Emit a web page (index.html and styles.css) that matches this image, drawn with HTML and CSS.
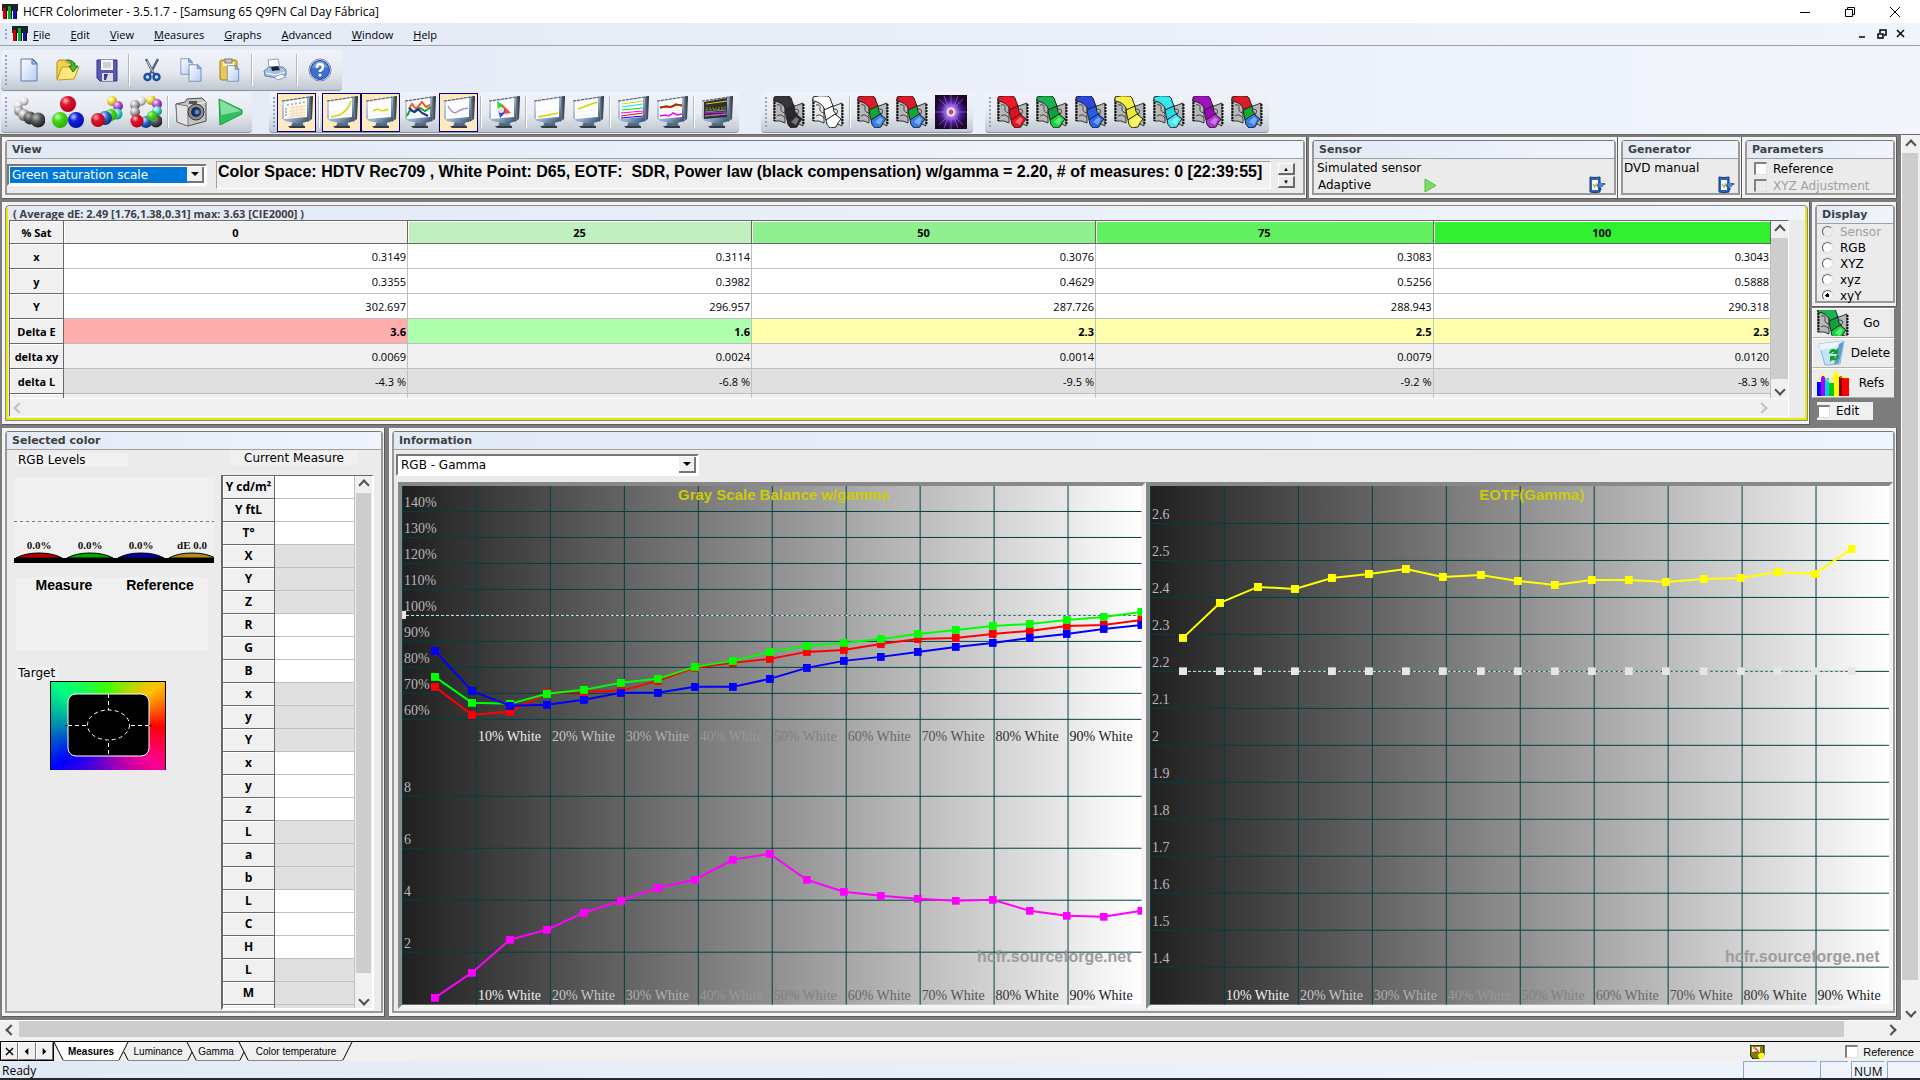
FILE: index.html
```html
<!DOCTYPE html>
<html lang="en">
<head>
  <meta charset="UTF-8" />
  <meta name="viewport" content="width=device-width, initial-scale=1.0" />
  <title>HCFR Colorimeter</title>
  <link rel="stylesheet" href="styles.css">
</head>
<body>
  <!-- ===== shared symbols ===== -->
  <svg class="defs" width="0" height="0" aria-hidden="true">
    <defs>
      <linearGradient id="g-bezel" x1="0" y1="0" x2="1" y2="1"><stop offset="0" stop-color="#d4e0ec"/><stop offset=".6" stop-color="#8ca8c8"/><stop offset="1" stop-color="#2d4460"/></linearGradient>
      <linearGradient id="g-side" x1="0" y1="0" x2="1" y2="0"><stop offset="0" stop-color="#8494a6"/><stop offset="1" stop-color="#1d2833"/></linearGradient>
      <linearGradient id="g-paper" x1="0" y1="0" x2="1" y2="1"><stop offset="0" stop-color="#fff"/><stop offset="1" stop-color="#b5cdf5"/></linearGradient>
      <linearGradient id="g-gray" x1="0" y1="0" x2="1" y2="0"><stop offset="0" stop-color="#202020"/><stop offset="1" stop-color="#fff"/></linearGradient>
      <radialGradient id="b-white" cx=".35" cy=".3" r=".7"><stop offset="0" stop-color="#fff"/><stop offset=".6" stop-color="#ddd"/><stop offset="1" stop-color="#888"/></radialGradient>
      <radialGradient id="b-gray" cx=".35" cy=".3" r=".7"><stop offset="0" stop-color="#fff"/><stop offset=".5" stop-color="#aaa"/><stop offset="1" stop-color="#555"/></radialGradient>
      <radialGradient id="b-dark" cx=".35" cy=".3" r=".7"><stop offset="0" stop-color="#bbb"/><stop offset=".5" stop-color="#555"/><stop offset="1" stop-color="#222"/></radialGradient>
      <radialGradient id="b-red" cx=".35" cy=".3" r=".7"><stop offset="0" stop-color="#fbb"/><stop offset=".4" stop-color="#dc1430"/><stop offset="1" stop-color="#b80018"/></radialGradient>
      <radialGradient id="b-green" cx=".35" cy=".3" r=".7"><stop offset="0" stop-color="#cfc"/><stop offset=".4" stop-color="#48d818"/><stop offset="1" stop-color="#28b008"/></radialGradient>
      <radialGradient id="b-blue" cx=".35" cy=".3" r=".7"><stop offset="0" stop-color="#bcd4ff"/><stop offset=".4" stop-color="#1020e0"/><stop offset="1" stop-color="#0610a0"/></radialGradient>
      <radialGradient id="b-sky" cx=".35" cy=".3" r=".7"><stop offset="0" stop-color="#d4e8ff"/><stop offset=".5" stop-color="#2868d0"/><stop offset="1" stop-color="#083484"/></radialGradient>
      <radialGradient id="b-cyan" cx=".35" cy=".3" r=".7"><stop offset="0" stop-color="#eff"/><stop offset=".5" stop-color="#4cd8cc"/><stop offset="1" stop-color="#148c84"/></radialGradient>
      <radialGradient id="b-yellow" cx=".35" cy=".3" r=".7"><stop offset="0" stop-color="#fff"/><stop offset=".5" stop-color="#f0dc30"/><stop offset="1" stop-color="#a08c00"/></radialGradient>
      <radialGradient id="b-violet" cx=".35" cy=".3" r=".7"><stop offset="0" stop-color="#fdf"/><stop offset=".5" stop-color="#b450d8"/><stop offset="1" stop-color="#702090"/></radialGradient>
      <radialGradient id="g-nova"><stop offset="0" stop-color="#e04878"/><stop offset=".13" stop-color="#c04880"/><stop offset=".18" stop-color="#fff"/><stop offset=".32" stop-color="#a878e8"/><stop offset=".62" stop-color="#4c1c98"/><stop offset="1" stop-color="#1c0828"/></radialGradient>

      <symbol id="logo" viewBox="0 0 16 16">
        <rect width="16" height="16" fill="#222"/><rect y="7" width="16" height="9" fill="#f4f4f4"/>
        <path d="M1 4h4v11H1z" fill="#c80000"/><path d="M6 2h4v13H6z" fill="#00b428"/><path d="M11 5h4v10h-4z" fill="#1010b4"/>
        <path d="M4 4h1v11H4zM9 2h1v13H9zM14 5h1v10h-1z" fill="#111"/>
      </symbol>
      <symbol id="monitor" viewBox="0 0 32 32">
        <path d="M12 26h9l2 4H10z" fill="#55677c"/><path d="M7 30h17v2H9z" fill="#333c46"/>
        <path d="M27 1l5-1-1 23-4 3z" fill="url(#g-side)"/>
        <path d="M1 5L28 1v24l-10 3-14-3-3-3z" fill="url(#g-bezel)"/>
        <path d="M1 5L31 .5" stroke="#4d5560" stroke-dasharray="3 1" fill="none"/>
        <path d="M3 6l23-4v19L3 23z" fill="var(--screen, #fdfdfd)"/>
        <path d="M4 20L25 18M4 16l21-2" stroke="#e4e8ec" fill="none" opacity=".5"/>
      </symbol>
      <symbol id="film" viewBox="0 0 32 32">
        <path d="M1 3v22h6l5 2V8zM18 9l4 1 8-3v23l-4-2h-8z" fill="var(--strip, #b8b8b8)" stroke="#333"/>
        <path d="M1.500 3v22M30.500 8v21" stroke="#111" stroke-width="2" stroke-dasharray="2 1"/>
        <path d="M4 9q5-1 4 3t4 5M4 20q4-3 8 2M22 13q5 0 3 4t3 5" fill="none" stroke="#444"/>
        <path d="M1 1Q7-1 16 0q3 2 3 5l2 5-8 4Q10 6 1 5z" fill="var(--a)" stroke="#222"/>
        <path d="M12 14l9-4q0 6 3 8l-10 6q-1-4-2-10z" fill="var(--b)" stroke="#222"/>
        <path d="M14 24l9-6 6 5q-3 3-5 8l-6 1q-4-3-4-8z" fill="var(--c)" stroke="#222"/>
        <path d="M18 26l5-5 3 2-3 6z" fill="#fff" opacity=".35"/>
      </symbol>
      <symbol id="doc" viewBox="0 0 18 24">
        <path d="M1 1h12l4 4v18H1z" fill="url(#g-paper)" stroke="#5a78b4"/><path d="M12 1v5h5z" fill="#a4bde8" stroke="#5a78b4"/>
      </symbol>
      <symbol id="clip" viewBox="0 0 18 20">
        <path d="M2 2q5 1 10 0v15q-5 1-10 0z" fill="#2c64b8" stroke="#123870"/><path d="M4 5h6v10H4z" fill="#f4f8ff"/>
        <path d="M5 9l2 3 2-4" stroke="#d0b040" stroke-width="1.500" fill="none"/><path d="M9 11l3-2h5M11 12l2 3" stroke="#1c4a90" stroke-width="2" fill="none"/><circle cx="13" cy="10" r="2.500" fill="#3c8ae8"/><circle cx="16.500" cy="9" r="1" fill="#c04020"/>
      </symbol>
    </defs>
  </svg>

  <!-- ===== title bar ===== -->
  <header class="titlebar">
    <svg class="app-icon"><use href="#logo"/></svg>
    <h1>HCFR Colorimeter - 3.5.1.7 - [Samsung 65 Q9FN Cal Day Fábrica]</h1>
    <div class="win-buttons">
      <button aria-label="Minimize"><svg viewBox="0 0 10 10"><path d="M0 5.500h10" /></svg></button>
      <button aria-label="Restore"><svg viewBox="0 0 10 10"><path d="M.5 2.500h7v7h-7zM2.500 2.500v-2h7v7h-2"/></svg></button>
      <button aria-label="Close"><svg viewBox="0 0 10 10"><path d="M0 0l10 10M10 0L0 10"/></svg></button>
    </div>
  </header>

  <!-- ===== menu ===== -->
  <nav class="menubar">
    <span class="grip"></span>
    <svg class="app-icon"><use href="#logo"/></svg>
    <a href="#"><u>F</u>ile</a>
    <a href="#"><u>E</u>dit</a>
    <a href="#"><u>V</u>iew</a>
    <a href="#"><u>M</u>easures</a>
    <a href="#"><u>G</u>raphs</a>
    <a href="#"><u>A</u>dvanced</a>
    <a href="#"><u>W</u>indow</a>
    <a href="#"><u>H</u>elp</a>
    <div class="mdi-buttons">
      <button aria-label="Minimize document"><svg viewBox="0 0 10 10"><path d="M1 8h6" /></svg></button>
      <button aria-label="Restore document"><svg viewBox="0 0 10 10"><path d="M1 5h5v4H1zM3 4V1h6v5H7"/></svg></button>
      <button aria-label="Close document"><svg viewBox="0 0 10 10"><path d="M1 1l7 7M8 1L1 8"/></svg></button>
    </div>
  </nav>

  <!-- ===== toolbars ===== -->
  <div class="toolbars">
    <div class="toolrow">
      <div class="toolbar">
        <span class="grip"></span>
        <button aria-label="New"><svg width="18" height="24"><use href="#doc"/></svg></button>
        <button aria-label="Open"><svg width="26" height="24" viewBox="0 0 26 24"><path d="M2 21V4l2-2h6l2 3h8v4" fill="#f4d050" stroke="#b08a10"/><path d="M2 22L7 9h17l-5 12z" fill="#ffe680" stroke="#c09a18"/><path d="M11 2q8-1 9 6l3 0-5 6-4-6h3q0-4-6-6z" fill="#4cb838" stroke="#1f7a18"/></svg></button>
        <button aria-label="Save"><svg width="22" height="23" viewBox="0 0 22 23"><path d="M1 1h20v21H4l-3-3z" fill="#5a56b8" stroke="#34307c"/><path d="M5 1h12v10H5z" fill="#f4f4fa"/><path d="M7 4h8M7 6h8M7 8h8" stroke="#aaa"/><path d="M6 14h11v8H6z" fill="#dcdce8"/><path d="M8 15h4l-2 6H8z" fill="#3c3888"/></svg></button>
        <span class="sep"></span>
        <button aria-label="Cut"><svg width="18" height="24" viewBox="0 0 18 24"><path d="M3 1l8 15M15 1L7 16" stroke="#52657c" stroke-width="2.500" fill="none"/><path d="M4 3l6 11" stroke="#c4d4e4" fill="none"/><circle cx="4.500" cy="19" r="3" fill="none" stroke="#1450a8" stroke-width="2.500"/><circle cx="13.500" cy="19" r="3" fill="none" stroke="#1450a8" stroke-width="2.500"/></svg></button>
        <button aria-label="Copy"><svg width="22" height="24" viewBox="0 0 22 24"><use href="#doc" width="13" height="17"/><use href="#doc" x="8" y="6" width="14" height="18"/></svg></button>
        <button aria-label="Paste"><svg width="22" height="24" viewBox="0 0 22 24"><rect x="1" y="2" width="17" height="20" rx="2" fill="#e8c858" stroke="#a07c18"/><path d="M4 4h11v4H4z" fill="#fff4c8"/><rect x="6" y="1" width="7" height="4" fill="#c8c8d0" stroke="#777"/><use href="#doc" x="7" y="7" width="14" height="17"/></svg></button>
        <span class="sep"></span>
        <button aria-label="Print"><svg width="24" height="24" viewBox="0 0 24 24"><path d="M6 9L5 2l10-1 2 9z" fill="#fff" stroke="#8ca0c0"/><path d="M1 13l5-4 14 0 3 3v5l-9 3-12-2z" fill="#a8c0e0" stroke="#6080ac"/><path d="M8 9l7-1 2 4-8 1z" fill="#14243c"/><path d="M11 19l8-3 4 3-8 3z" fill="#f6faff" stroke="#8ca0c0"/><path d="M3 15l10 2 9-3" stroke="#fff" fill="none"/></svg></button>
        <span class="sep"></span>
        <button aria-label="Help"><svg width="24" height="24" viewBox="0 0 24 24"><circle cx="12" cy="12" r="11" fill="#f4f6fa" stroke="#7888a8"/><circle cx="12" cy="12" r="9.500" fill="#3c70d0" stroke="#1c469c"/><path d="M4 10q3-7 8-7t8 7q-8-3-16 0z" fill="#fff" opacity=".3"/><path d="M9 10q0-4 3-4t3 3q0 2-3 4v1" fill="none" stroke="#fff" stroke-width="2.500"/><circle cx="12" cy="17" r="1.500" fill="#fff"/></svg></button>
      </div>
    </div>
    <div class="toolrow">
      <div class="toolbar">
        <span class="grip"></span>
        <button aria-label="Measure gray scale"><svg width="32" height="32" viewBox="0 0 32 32"><circle cx="11" cy="5" r="4.500" fill="url(#b-white)"/><circle cx="5" cy="9" r="4.500" fill="url(#b-white)"/><circle cx="6" cy="15" r="5" fill="url(#b-gray)"/><circle cx="11" cy="19" r="6" fill="url(#b-gray)"/><circle cx="17" cy="22" r="6.500" fill="url(#b-dark)"/><circle cx="25" cy="24" r="7.500" fill="url(#b-dark)"/></svg></button>
        <button aria-label="Measure primaries"><svg width="32" height="32" viewBox="0 0 32 32"><circle cx="16" cy="8" r="8" fill="url(#b-red)"/><circle cx="8" cy="24" r="8" fill="url(#b-green)"/><circle cx="24" cy="24" r="8" fill="url(#b-blue)"/></svg></button>
        <button aria-label="Measure secondaries"><svg width="32" height="32" viewBox="0 0 32 32"><circle cx="21" cy="5" r="5" fill="url(#b-yellow)"/><circle cx="27" cy="10" r="5" fill="url(#b-violet)"/><circle cx="26" cy="18" r="5.500" fill="url(#b-cyan)"/><circle cx="20" cy="19" r="6" fill="url(#b-green)"/><circle cx="14" cy="22" r="7" fill="url(#b-sky)"/><circle cx="7" cy="24" r="7" fill="url(#b-red)"/></svg></button>
        <button aria-label="Measure all"><svg width="32" height="32" viewBox="0 0 32 32"><circle cx="11" cy="5" r="5" fill="url(#b-white)"/><circle cx="21" cy="4" r="5" fill="url(#b-yellow)"/><circle cx="27" cy="8" r="5" fill="url(#b-violet)"/><circle cx="5" cy="9" r="5" fill="url(#b-gray)"/><circle cx="5" cy="16" r="5" fill="url(#b-gray)"/><circle cx="27" cy="15" r="5" fill="url(#b-cyan)"/><circle cx="16" cy="26" r="6" fill="url(#b-sky)"/><circle cx="7" cy="25" r="6.500" fill="url(#b-red)"/><circle cx="26" cy="25" r="6.500" fill="url(#b-dark)"/><circle cx="22" cy="20" r="5" fill="url(#b-green)"/></svg></button>
        <span class="sep"></span>
        <button aria-label="Camera"><svg width="32" height="30" viewBox="0 0 32 30"><path d="M1 7l9-2 2-3 15-1 4 4v19l-18 5-11-4z" fill="#c4c4c4" stroke="#4c4c4c"/><path d="M1 7l12 2v20l-11-4z" fill="#e4e4e4" stroke="#777"/><path d="M13 9l18-4" stroke="#f8f8f8"/><circle cx="21" cy="15" r="8" fill="#8c8c8c" stroke="#333"/><circle cx="21" cy="15" r="5" fill="#1c2c50"/><circle cx="22" cy="15" r="2.500" fill="#4c88d0"/><path d="M14 4h8v3h-8z" fill="#555"/></svg></button>
        <button aria-label="Run"><svg width="26" height="28" viewBox="0 0 26 28"><path d="M2 1l23 11v4L3 27z" fill="#30c060" stroke="#1c9844"/><path d="M3 2l21 11L4 17z" fill="#84e0a0"/></svg></button>
      </div>
      <div class="toolbar bar-graphs">
        <span class="grip"></span>
        <button class="on" aria-label="Table"><svg width="32" height="32" viewBox="0 0 32 32"><use href="#monitor"/><path d="M6 9l18-3" stroke="#b4b0b8" stroke-width="2" stroke-dasharray="2 2"/><path d="M5 12v9" stroke="#b4b0b8" stroke-width="2" stroke-dasharray="2 1"/><path d="M8 12l17-2M8 15l17-2M8 18l17-2M8 21l17-2M12 10v11M16 10v10M20 9v11" stroke="#fbe0b0" stroke-width="1.500" fill="none"/></svg></button>
        <span class="sep"></span>
        <button class="on" aria-label="Luminance"><svg width="32" height="32" viewBox="0 0 32 32"><use href="#monitor"/><path d="M5 21q16-2 20-16" stroke="#d8d400" stroke-width="1.500" fill="none"/></svg></button>
        <button class="on" aria-label="Gamma graph"><svg width="32" height="32" viewBox="0 0 32 32"><use href="#monitor"/><path d="M8 15q4-3 7-1t8-1" stroke="#d8d400" stroke-width="1.500" fill="none"/></svg></button>
        <button aria-label="RGB levels"><svg width="32" height="32" viewBox="0 0 32 32"><use href="#monitor"/><path d="M5 13l3-5 4 5 6-7 4 5 4-2" stroke="#e85c20" stroke-width="2" fill="none"/><path d="M3 20l3-6 5 2 5-4 5 3 6-4" stroke="#18a020" stroke-width="2" fill="none"/><path d="M5 12l5 4 4-3 4 4 6 3" stroke="#1c2c9c" stroke-width="2" fill="none"/></svg></button>
        <button class="on" aria-label="Color temperature graph"><svg width="32" height="32" viewBox="0 0 32 32"><use href="#monitor"/><path d="M5 10q5 9 9 6t11-4" stroke="#9c90e0" stroke-width="1.500" fill="none"/></svg></button>
        <span class="sep"></span>
        <button aria-label="CIE diagram"><svg width="32" height="32" viewBox="0 0 32 32"><use href="#monitor"/><path d="M9 5l6 4-5 7z" fill="#20e030"/><path d="M14 8l9 9-8 1-2-5z" fill="#f05030"/><path d="M10 14l7 0-1 4-4 4z" fill="#4040f0"/><circle cx="13" cy="14" r="3" fill="#d8e8f0"/></svg></button>
        <span class="sep"></span>
        <button aria-label="Near black"><svg width="32" height="32" viewBox="0 0 32 32"><use href="#monitor"/><path d="M5 21l20-4" stroke="#d8d400" stroke-width="1.500"/></svg></button>
        <button aria-label="Near white"><svg width="32" height="32" viewBox="0 0 32 32"><use href="#monitor"/><path d="M6 13l19-7" stroke="#d8d400" stroke-width="1.500"/></svg></button>
        <span class="sep"></span>
        <button aria-label="Saturation luminance"><svg width="32" height="32" viewBox="0 0 32 32"><use href="#monitor"/><path d="M5 8l21-3" stroke="#d8d400"/><path d="M5 11l21-3" stroke="#00e8e8"/><path d="M5 14l21-2" stroke="#00e000"/><path d="M4 17l22-2" stroke="#f0f"/><path d="M4 20l22-3" stroke="red"/><path d="M4 22l22-2" stroke="#00f"/></svg></button>
        <button aria-label="Saturation shift"><svg width="32" height="32" viewBox="0 0 32 32"><use href="#monitor"/><path d="M4 12l6-2 5 1 5-2 6 0" stroke="#00c000" fill="none" stroke-width="2"/><path d="M4 11l6 0 5 0 5-3 6 2" stroke="red" fill="none" stroke-width="1.500"/><path d="M4 20l5-1 4 1 4-3 4 2 5-1" stroke="#f0f" fill="none" stroke-width="1.500"/></svg></button>
        <span class="sep"></span>
        <button class="dark-screen" aria-label="Measures combo"><svg width="32" height="32" viewBox="0 0 32 32"><use href="#monitor"/><path d="M5 8l21-3" stroke="#d8d400"/><path d="M5 12l10 0 10-1" stroke="#e85c20" stroke-dasharray="2 1"/><path d="M4 14l21-1" stroke="#18c030" stroke-dasharray="3 1"/><path d="M4 17l22-1" stroke="#f0f"/><path d="M4 20l22-2" stroke="#88a"/></svg></button>
      </div>
      <div class="toolbar bar-patterns">
        <span class="grip"></span>
        <button class="film-black" aria-label="Black pattern"><svg width="32" height="32"><use href="#film"/></svg></button>
        <button class="film-white" aria-label="White pattern"><svg width="32" height="32"><use href="#film"/></svg></button>
        <span class="sep"></span>
        <button class="film-rgb" aria-label="Primary patterns"><svg width="32" height="32"><use href="#film"/></svg></button>
        <button class="film-rgb" aria-label="Secondary patterns"><svg width="32" height="32"><use href="#film"/></svg></button>
        <button aria-label="Contrast"><svg width="32" height="34" viewBox="0 0 32 34"><rect width="32" height="34" fill="url(#g-nova)"/><path d="M16 0v10M16 24v10M0 17h9M23 17h9M4 4l8 8M28 4l-8 8M4 30l8-8M28 30l-8-8M9 1l4 10M23 1l-4 10M9 33l4-10M23 33l-4-10" stroke="#b890ff" opacity=".5"/></svg></button>
      </div>
      <div class="toolbar bar-colors">
        <span class="grip"></span>
        <button class="film-red" aria-label="Red saturation"><svg width="32" height="32"><use href="#film"/></svg></button>
        <button class="film-green" aria-label="Green saturation"><svg width="32" height="32"><use href="#film"/></svg></button>
        <button class="film-blue" aria-label="Blue saturation"><svg width="32" height="32"><use href="#film"/></svg></button>
        <button class="film-yellow" aria-label="Yellow saturation"><svg width="32" height="32"><use href="#film"/></svg></button>
        <button class="film-cyan" aria-label="Cyan saturation"><svg width="32" height="32"><use href="#film"/></svg></button>
        <button class="film-violet" aria-label="Magenta saturation"><svg width="32" height="32"><use href="#film"/></svg></button>
        <button class="film-rgb" aria-label="All saturations"><svg width="32" height="32"><use href="#film"/></svg></button>
      </div>
    </div>
  </div>

  <!-- ===== document ===== -->
  <div class="document">
    <main class="workspace">
      <div class="row-top">
        <section class="panel panel-view">
          <div class="box">
            <h2>View</h2>
            <div class="view-body">
              <div class="combo combo-view">
                <select aria-label="View"><option>Green saturation scale</option></select>
                <span class="combo-arrow"></span>
              </div>
              <div class="readout">Color Space: HDTV Rec709 , White Point: D65, EOTF:&nbsp; SDR, Power law (black compensation) w/gamma = 2.20, # of measures: 0 [22:39:55]</div>
              <div class="spin"><button aria-label="Up">▲</button><button aria-label="Down">▼</button></div>
            </div>
          </div>
        </section>
        <section class="panel panel-sensor">
          <div class="box">
            <h2>Sensor</h2>
            <div class="device">
              <p>Simulated sensor</p>
              <div class="device-row">
                <span class="adaptive">Adaptive</span>
                <svg class="tri" width="13" height="13" viewBox="0 0 13 13"><path d="M1 0l11 6.500L1 13z" fill="#78e060" stroke="#5cb848"/></svg>
                <button class="config" aria-label="Configure sensor"><svg width="18" height="20"><use href="#clip"/></svg></button>
              </div>
            </div>
          </div>
        </section>
        <section class="panel panel-generator">
          <div class="box">
            <h2>Generator</h2>
            <div class="device">
              <p>DVD manual</p>
              <div class="device-row">
                <button class="config" aria-label="Configure generator"><svg width="18" height="20"><use href="#clip"/></svg></button>
              </div>
            </div>
          </div>
        </section>
        <section class="panel panel-params">
          <div class="box">
            <h2>Parameters</h2>
            <div class="params">
              <label><input type="checkbox"> <span>Reference</span></label>
              <label class="off"><input type="checkbox" disabled> <span>XYZ Adjustment</span></label>
            </div>
          </div>
        </section>
      </div>

      <div class="row-mid">
        <section class="panel panel-table">
          <div class="box box-active">
            <h2>( Average dE: 2.49 [1.76,1.38,0.31] max: 3.63 [CIE2000] )</h2>
            <div class="grid-pane">
              <div class="grid-view">
                <table class="data">
                  <colgroup><col class="c-head"><col class="c-wide"><col class="c-wide"><col class="c-wide"><col><col></colgroup>
                  <thead>
                    <tr><th>% Sat</th><th>0</th><th class="s25">25</th><th class="s50">50</th><th class="s75">75</th><th class="s100">100</th></tr>
                  </thead>
                  <tbody>
                    <tr><th>x</th><td>0.3149</td><td>0.3114</td><td>0.3076</td><td>0.3083</td><td>0.3043</td></tr>
                    <tr><th>y</th><td>0.3355</td><td>0.3982</td><td>0.4629</td><td>0.5256</td><td>0.5888</td></tr>
                    <tr><th>Y</th><td>302.697</td><td>296.957</td><td>287.726</td><td>288.943</td><td>290.318</td></tr>
                    <tr class="delta-e"><th>Delta E</th><td class="bad">3.6</td><td class="good">1.6</td><td class="fair">2.3</td><td class="fair">2.5</td><td class="fair">2.3</td></tr>
                    <tr class="light"><th>delta xy</th><td>0.0069</td><td>0.0024</td><td>0.0014</td><td>0.0079</td><td>0.0120</td></tr>
                    <tr class="mid"><th>delta L</th><td>-4.3 %</td><td>-6.8 %</td><td>-9.5 %</td><td>-9.2 %</td><td>-8.3 %</td></tr>
                    <tr class="light"><th></th><td></td><td></td><td></td><td></td><td></td></tr>
                  </tbody>
                </table>
                <div class="vscroll"><button class="up" aria-label="Scroll up"></button><div class="thumb"></div><button class="down" aria-label="Scroll down"></button></div>
              </div>
              <div class="hscroll faint"><button class="left" aria-label="Scroll left"></button><button class="right" aria-label="Scroll right"></button></div>
            </div>
          </div>
        </section>
        <aside class="side">
          <section class="panel panel-display">
            <div class="box">
              <h2>Display</h2>
              <div class="radios">
                <label class="off"><input type="radio" name="display" disabled> <span>Sensor</span></label>
                <label><input type="radio" name="display"> <span>RGB</span></label>
                <label><input type="radio" name="display"> <span>XYZ</span></label>
                <label><input type="radio" name="display"> <span>xyz</span></label>
                <label><input type="radio" name="display" checked> <span>xyY</span></label>
              </div>
            </div>
          </section>
          <div class="side-buttons">
            <button class="film-green"><svg width="32" height="26" viewBox="0 3 32 26" preserveAspectRatio="none"><use href="#film" width="32" height="32"/></svg><span>Go</span></button>
            <button><svg width="30" height="26" viewBox="0 0 30 26"><path d="M2 4l25-3-4 23-15 1z" fill="#c4e4f8" stroke="#88b8dc"/><path d="M2 4l25-3-1 5-23 4z" fill="#eaf6ff"/><path d="M22 4l5-3-5 22-5 2z" fill="#5c9cd0"/><path d="M12 13q2-6 7-3l2-2 0 6h-6l2-2q-2-1-3 2zM22 15q-1 7-7 5l-2 2v-6h6l-2 2q2 1 3-3z" fill="#10a028"/></svg><span>Delete</span></button>
            <button><svg width="32" height="26" viewBox="0 0 32 26"><path d="M0 12h4v14H0z" fill="#00f"/><path d="M4 6h4v20H4z" fill="#a0f"/><path d="M8 8h4v18H8z" fill="#0cf"/><path d="M12 13h5v13h-5z" fill="#0c0"/><path d="M17 0l5 5v21h-5z" fill="#ff0"/><path d="M22 6h3v20h-3z" fill="#800000"/><path d="M25 8h7v18h-7z" fill="red"/><path d="M1 12l5-8 4 6 4 3 4-12 5 6 7 1" stroke="#ff0" fill="none"/></svg><span>Refs</span></button>
          </div>
          <label class="edit-box"><input type="checkbox"> <span>Edit</span></label>
        </aside>
      </div>

      <div class="row-bottom">
        <section class="panel panel-color">
          <div class="box">
            <h2>Selected color</h2>
            <div class="color-body">
              <div class="levels-col">
                <p class="tag tag-levels">RGB Levels</p>
                <svg class="levels" viewBox="0 0 200 86">
                  <rect width="200" height="86" fill="#f0f0f0"/>
                  <path d="M0 44.500h200" stroke="#777" stroke-dasharray="3 3"/>
                  <g stroke="#000">
                    <path d="M2 81q9-5 23-5t23 5z" fill="#b40000"/>
                    <path d="M53 81q9-5 23-5t23 5z" fill="#00a800"/>
                    <path d="M104 81q9-5 23-5t23 5z" fill="#0000a8"/>
                    <path d="M155 81q9-5 23-5t23 5z" fill="#b88c10"/>
                  </g>
                  <rect y="81" width="200" height="5" fill="#000"/>
                  <g class="level-text">
                    <text x="25" y="72">0.0%</text><text x="76" y="72">0.0%</text><text x="127" y="72">0.0%</text><text x="178" y="72">dE 0.0</text>
                  </g>
                </svg>
                <div class="compare"><span>Measure</span><span>Reference</span></div>
                <p class="tag tag-target">Target</p>
                <div class="target">
                  <svg viewBox="0 0 114 88">
                    <rect x="17" y="12" width="81" height="62" rx="8" stroke="#fff" />
                    <path d="M14 43.500h87" stroke="#000"/>
                    <path d="M57.500 12v62M17 43.500h81" stroke="#fff" stroke-dasharray="4 3" fill="none"/>
                    <ellipse cx="57.500" cy="43" rx="21" ry="15" stroke="#fff" stroke-dasharray="4 3"/>
                  </svg>
                </div>
              </div>
              <div class="measure-col">
                <p class="tag">Current Measure</p>
                <div class="measure-pane">
                  <table class="measure">
                    <tbody>
                      <tr><th>Y cd/m²</th><td></td></tr>
                      <tr><th>Y ftL</th><td></td></tr>
                      <tr><th>T°</th><td></td></tr>
                      <tr class="mid"><th>X</th><td></td></tr>
                      <tr class="mid"><th>Y</th><td></td></tr>
                      <tr class="mid"><th>Z</th><td></td></tr>
                      <tr><th>R</th><td></td></tr>
                      <tr><th>G</th><td></td></tr>
                      <tr><th>B</th><td></td></tr>
                      <tr class="mid"><th>x</th><td></td></tr>
                      <tr class="mid"><th>y</th><td></td></tr>
                      <tr class="mid"><th>Y</th><td></td></tr>
                      <tr><th>x</th><td></td></tr>
                      <tr><th>y</th><td></td></tr>
                      <tr><th>z</th><td></td></tr>
                      <tr class="mid"><th>L</th><td></td></tr>
                      <tr class="mid"><th>a</th><td></td></tr>
                      <tr class="mid"><th>b</th><td></td></tr>
                      <tr><th>L</th><td></td></tr>
                      <tr><th>C</th><td></td></tr>
                      <tr><th>H</th><td></td></tr>
                      <tr class="mid"><th>L</th><td></td></tr>
                      <tr class="mid"><th>M</th><td></td></tr>
                      <tr class="mid"><th></th><td></td></tr>
                    </tbody>
                  </table>
                  <div class="vscroll"><button class="up" aria-label="Scroll up"></button><div class="thumb"></div><button class="down" aria-label="Scroll down"></button></div>
                </div>
              </div>
            </div>
          </div>
        </section>

        <section class="panel panel-info">
          <div class="box">
            <h2>Information</h2>
            <div class="info-body">
              <div class="combo combo-info">
                <select aria-label="Information"><option>RGB - Gamma</option></select>
                <span class="combo-arrow"></span>
              </div>
              <div class="charts">
                <div class="chart">
                  <svg viewBox="0 0 740 519">
                    <defs>
                      <marker id="m-red" markerUnits="userSpaceOnUse" markerWidth="8" markerHeight="8" refX="4" refY="4"><rect width="8" height="8" fill="red"/></marker>
                      <marker id="m-green" markerUnits="userSpaceOnUse" markerWidth="8" markerHeight="8" refX="4" refY="4"><rect width="8" height="8" fill="#0f0"/></marker>
                      <marker id="m-blue" markerUnits="userSpaceOnUse" markerWidth="8" markerHeight="8" refX="4" refY="4"><rect width="8" height="8" fill="#00f"/></marker>
                      <marker id="m-magenta" markerUnits="userSpaceOnUse" markerWidth="8" markerHeight="8" refX="4" refY="4"><rect width="8" height="8" fill="#f0f"/></marker>
                    </defs>
                    <rect width="740" height="519" fill="url(#g-gray)"/>
                    <path class="gridline" d="M.5 0v519M74.500 0v519M148.500 0v519M222.500 0v519M296.500 0v519M370.500 0v519M444.500 0v519M518.500 0v519M592.500 0v519M666.500 0v519M0 25.500h740M0 51.500h740M0 77.500h740M0 103.500h740M0 129.500h740M0 155.500h740M0 181.500h740M0 207.500h740M0 233.500h740M0 310.500h740M0 362.500h740M0 414.500h740M0 466.500h740"/>
                    <path d="M4 129.500h736" stroke="#e8e8e8" stroke-dasharray="3 2"/><rect y="125" width="4" height="8" fill="#e8e8e8"/>
                    <g class="axis-y">
                      <text x="2" y="21">140%</text><text x="2" y="47">130%</text><text x="2" y="73">120%</text><text x="2" y="99">110%</text><text x="2" y="125">100%</text><text x="2" y="151">90%</text><text x="2" y="177">80%</text><text x="2" y="203">70%</text><text x="2" y="229">60%</text>
                      <text x="2" y="306">8</text><text x="2" y="358">6</text><text x="2" y="410">4</text><text x="2" y="462">2</text>
                    </g>
                    <g class="axis-x">
                      <text x="76" y="255" fill="#eee">10% White</text><text x="150" y="255" fill="#c8c8c8">20% White</text><text x="224" y="255" fill="#b0b0b0">30% White</text><text x="298" y="255" fill="#989898">40% White</text><text x="372" y="255" fill="#808080">50% White</text><text x="446" y="255" fill="#686868">60% White</text><text x="520" y="255" fill="#505050">70% White</text><text x="594" y="255" fill="#303030">80% White</text><text x="668" y="255" fill="#181818">90% White</text>
                      <text x="76" y="514" fill="#eee">10% White</text><text x="150" y="514" fill="#c8c8c8">20% White</text><text x="224" y="514" fill="#b0b0b0">30% White</text><text x="298" y="514" fill="#989898">40% White</text><text x="372" y="514" fill="#808080">50% White</text><text x="446" y="514" fill="#686868">60% White</text><text x="520" y="514" fill="#505050">70% White</text><text x="594" y="514" fill="#303030">80% White</text><text x="668" y="514" fill="#181818">90% White</text>
                    </g>
                    <text class="chart-title" x="382" y="14">Gray Scale Balance w/gamma</text>
                    <text class="watermark" x="730" y="476">hcfr.sourceforge.net</text>
                    <polyline class="series red" points="33,201 70,229 108,226 145,207 182,206 219,205 256,195 293,182 331,177 368,173 405,166 442,164 479,158 516,153 554,152 591,148 628,145 665,140 702,139 740,134"/>
                    <polyline class="series green" points="33,191 70,217 108,218 145,208 182,204 219,197 256,193 293,181 331,175 368,166 405,160 442,157 479,153 516,148 554,144 591,140 628,138 665,134 702,131 740,126"/>
                    <polyline class="series blue" points="33,165 70,205 108,220 145,219 182,214 219,207 256,207 293,201 331,201 368,193 405,182 442,175 479,171 516,166 554,161 591,157 628,152 665,148 702,143 740,139"/>
                    <polyline class="series magenta" points="33,512 70,487 108,454 145,444 182,427 219,415 256,402 293,394 331,374 368,368 405,394 442,406 479,410 516,413 554,415 591,414 628,425 665,430 702,431 740,425"/>
                  </svg>
                </div>
                <div class="chart">
                  <svg viewBox="0 0 740 519">
                    <defs>
                      <marker id="m-yellow" markerUnits="userSpaceOnUse" markerWidth="8" markerHeight="8" refX="4" refY="4"><rect width="8" height="8" fill="#ff0"/></marker>
                      <marker id="m-white" markerUnits="userSpaceOnUse" markerWidth="8" markerHeight="8" refX="4" refY="4"><rect width="8" height="8" fill="#e6e6e6"/></marker>
                    </defs>
                    <rect width="740" height="519" fill="url(#g-gray)"/>
                    <path class="gridline" d="M.5 0v519M74.500 0v519M148.500 0v519M222.500 0v519M296.500 0v519M370.500 0v519M444.500 0v519M518.500 0v519M592.500 0v519M666.500 0v519M0 37.500h740M0 74.500h740M0 111.500h740M0 148.500h740M0 185.500h740M0 222.500h740M0 259.500h740M0 296.500h740M0 333.500h740M0 370.500h740M0 407.500h740M0 444.500h740M0 481.500h740"/>
                    <g class="axis-y">
                      <text x="2" y="33">2.6</text><text x="2" y="70">2.5</text><text x="2" y="107">2.4</text><text x="2" y="144">2.3</text><text x="2" y="181">2.2</text><text x="2" y="218">2.1</text><text x="2" y="255">2</text><text x="2" y="292">1.9</text><text x="2" y="329">1.8</text><text x="2" y="366">1.7</text><text x="2" y="403">1.6</text><text x="2" y="440">1.5</text><text x="2" y="477">1.4</text>
                    </g>
                    <g class="axis-x">
                      <text x="76" y="514" fill="#eee">10% White</text><text x="150" y="514" fill="#c8c8c8">20% White</text><text x="224" y="514" fill="#b0b0b0">30% White</text><text x="298" y="514" fill="#989898">40% White</text><text x="372" y="514" fill="#808080">50% White</text><text x="446" y="514" fill="#686868">60% White</text><text x="520" y="514" fill="#505050">70% White</text><text x="594" y="514" fill="#303030">80% White</text><text x="668" y="514" fill="#181818">90% White</text>
                    </g>
                    <text class="chart-title" x="382" y="14">EOTF(Gamma)</text>
                    <text class="watermark" x="730" y="476">hcfr.sourceforge.net</text>
                    <polyline class="series white" points="33,185.500 70,185.500 108,185.500 145,185.500 182,185.500 219,185.500 256,185.500 293,185.500 331,185.500 368,185.500 405,185.500 442,185.500 479,185.500 516,185.500 554,185.500 591,185.500 628,185.500 665,185.500 702,185.500"/>
                    <polyline class="series yellow" points="33,152 70,117 108,101 145,103 182,92 219,88 256,83 293,91 331,89 368,95 405,99 442,94 479,94 516,96 554,93 591,92 628,86 665,88 702,63"/>
                  </svg>
                </div>
              </div>
            </div>
          </div>
        </section>
      </div>
    </main>
    <div class="vscroll doc-v"><button class="up" aria-label="Scroll up"></button><div class="thumb"></div><button class="down" aria-label="Scroll down"></button></div>
    <div class="hscroll doc-h"><button class="left" aria-label="Scroll left"></button><div class="thumb"></div><button class="right" aria-label="Scroll right"></button></div>
  </div>

  <!-- ===== tabs ===== -->
  <div class="tabstrip">
    <div class="tab-nav">
      <button aria-label="Close tab"><svg viewBox="0 0 10 10"><path d="M1 1l8 8M9 1L1 9" stroke="#000" stroke-width="1.500"/></svg></button>
      <button aria-label="Previous tab"><svg viewBox="0 0 10 10"><path d="M7 1v8L3 5z"/></svg></button>
      <button aria-label="Next tab"><svg viewBox="0 0 10 10"><path d="M3 1v8l4-4z"/></svg></button>
    </div>
    <div class="tabs">
      <a href="#" class="tab tab-measures"><svg viewBox="0 0 74 19"><path d="M0 0l9 18h56l9-18z" fill="#fff"/><path d="M0 0l9 18M65 18l9-18" stroke="#000" fill="none"/><path d="M9 18.500h56" stroke="#888"/></svg><span>Measures</span></a>
      <a href="#" class="tab tab-luminance"><svg viewBox="0 0 60 19"><path d="M-4 10l4 8M60 18l4-8M59 0l9 18" stroke="#000" fill="none"/><path d="M0 18.500h60" stroke="#888"/></svg><span>Luminance</span></a>
      <a href="#" class="tab tab-gamma"><svg viewBox="0 0 52 19"><path d="M52 18l4-8M51 0l9 18" stroke="#000" fill="none"/><path d="M8 18.500h44" stroke="#888"/></svg><span>Gamma</span></a>
      <a href="#" class="tab tab-temp"><svg viewBox="0 0 112 19"><path d="M103 18l9-18" stroke="#000" fill="none"/><path d="M8 18.500h95" stroke="#888"/></svg><span>Color temperature</span></a>
    </div>
    <svg class="badge-icon" width="15" height="14" viewBox="0 0 15 14"><path d="M0 0h14v10l-3 4H3l-3-4z" fill="#808000" stroke="#000"/><path d="M2 2h8v5H2z" fill="#fff"/><path d="M3 3h3v2h2v2H4" stroke="red" fill="none"/><path d="M8 10l2-2h4v3l-2 3H9z" fill="#ff0"/></svg>
    <label class="tab-ref"><input type="checkbox"> <span>Reference</span></label>
  </div>

  <!-- ===== status bar ===== -->
  <footer class="statusbar">
    <span class="ready">Ready</span>
    <span class="cell cell-wide"></span>
    <span class="cell cell-small"></span>
    <span class="cell cell-num">NUM</span>
    <span class="cell cell-num"></span>
  </footer>
  <div class="edge"></div>
</body>
</html>
```
FILE: styles.css
```css
* {
  box-sizing: border-box;
}

body {
  margin: 0;
  height: 100vh;
  display: flex;
  flex-direction: column;
  overflow: hidden;
  background: #f0f0f0;
  color: #000;
  font-family: "Open Sans", "Noto Sans", sans-serif;
  font-size: 12px;
}

h1, h2, p {
  margin: 0;
  font-weight: normal;
}

button {
  margin: 0;
  padding: 0;
  border: 0;
  background: none;
  font: inherit;
  color: inherit;
}

a {
  color: inherit;
  text-decoration: none;
}

svg {
  display: block;
}

.defs {
  position: absolute;
}

/* title bar */
.titlebar {
  height: 23px;
  flex: none;
  display: flex;
  align-items: center;
  background: #fff;
  padding: 0 3px 0 2px;
}
.titlebar h1 {
  font-size: 12px;
  margin-left: 5px;
  flex: 1;
}
.app-icon {
  width: 16px;
  height: 16px;
}
.win-buttons {
  display: flex;
}
.win-buttons button {
  width: 45px;
  height: 20px;
  display: flex;
  align-items: center;
  justify-content: center;
}
.win-buttons svg {
  width: 10px;
  height: 10px;
  fill: none;
  stroke: #000;
}

/* menu */
.menubar {
  height: 23px;
  flex: none;
  display: flex;
  align-items: center;
  gap: 20px;
  padding-left: 5px;
  background: linear-gradient(90deg, #e2eaf6, #f0f4fc);
  border-bottom: 1px solid #a0a0a0;
  font-size: 11px;
}
.grip {
  width: 2px;
  background: repeating-linear-gradient(#8fa4cc 0 2px, transparent 2px 4px);
}
.menubar .grip {
  height: 10px;
  margin-right: -15px;
}
.menubar .app-icon {
  margin-right: -15px;
}
.mdi-buttons {
  display: flex;
  gap: 9px;
  margin-left: auto;
  padding-right: 14px;
}
.mdi-buttons svg {
  width: 10px;
  height: 10px;
  fill: none;
  stroke: #000;
  stroke-width: 1.5;
}

/* toolbars */
.toolbars {
  flex: none;
  background: linear-gradient(90deg, #e2eaf6, #f2f5fc);
  padding: 4px 1px 1px;
  display: flex;
  flex-direction: column;
  gap: 1px;
}
.toolrow {
  display: flex;
}
.toolbar {
  height: 41px;
  display: flex;
  align-items: center;
  padding-right: 3px;
  border-radius: 4px;
  border-bottom: 1px solid #8c949c;
  background: linear-gradient(#f0f4fa 0%, #e6eaf0 55%, #c0c7d0 100%);
}
.toolbar .grip {
  height: 30px;
  margin: 0 2px 0 4px;
}
.toolbar button {
  width: 39px;
  height: 39px;
  display: flex;
  align-items: center;
  justify-content: center;
}
.toolbar button.on {
  background: #ffeabf;
  border: 1px solid #000080;
}
.sep {
  width: 2px;
  height: 32px;
  margin: 0 2px;
  background: #b4bac4;
  border-right: 1px solid #fff;
}
.bar-graphs {
  margin-left: 17px;
}
.bar-patterns {
  margin-left: 22px;
}
.bar-colors {
  margin-left: 12px;
}
.dark-screen { --screen: #303030; }
.film-black { --a: #38343c; --b: #2c2830; --c: #2c2830; }
.film-white { --a: #fff; --b: #fff; --c: #fff; --strip: #e8e8e8; }
.film-rgb { --a: #e01828; --b: #10a830; --c: #3080f0; }
.film-red { --a: #f01828; --b: #e01020; --c: #f01020; }
.film-green { --a: #18b450; --b: #10a040; --c: #10d838; }
.film-blue { --a: #2848e0; --b: #2060e8; --c: #2868f0; }
.film-yellow { --a: #f8f040; --b: #f0e828; --c: #f8f448; }
.film-cyan { --a: #38e8f0; --b: #28d8e8; --c: #40e8f0; }
.film-violet { --a: #a010c0; --b: #9808b8; --c: #b030d0; }

/* document area */
.document {
  flex: 1;
  min-height: 0;
  display: grid;
  grid-template-columns: 1fr 19px;
  grid-template-rows: 1fr 21px;
  border-top: 1px solid #696969;
}
.workspace {
  min-width: 0;
  min-height: 0;
  display: flex;
  flex-direction: column;
  gap: 3px;
  padding: 2px 4px 3px 2px;
  background: #7c7c7c;
}
.panel {
  padding: 3px 1px 3px 3px;
  background: #f4f4f4;
  border-right: 1px solid #5c5c5c;
  border-bottom: 1px solid #5c5c5c;
  display: flex;
}
.box {
  flex: 1;
  min-width: 0;
  border: 2px solid #999;
  border-top: 1px solid #777;
  border-radius: 4px 4px 0 0;
  background: #ebebeb;
  display: flex;
  flex-direction: column;
}
.box h2 {
  height: 18px;
  flex: none;
  padding-left: 5px;
  line-height: 18px;
  font-family: "DejaVu Sans", sans-serif;
  font-size: 11px;
  font-weight: bold;
  color: #404040;
  background: linear-gradient(90deg, #e2eaf6, #f0f4fc);
  border-bottom: 1px solid #a0a0a0;
  white-space: nowrap;
}

/* combo boxes */
.combo {
  height: 22px;
  display: flex;
  border: 2px solid #777;
  border-right-color: #fff;
  border-bottom-color: #fff;
  background: #fff;
  padding: 1px;
}
.combo select {
  flex: 1;
  min-width: 0;
  appearance: none;
  border: 0;
  padding: 0 2px;
  background: #fff;
  font-family: "DejaVu Sans", sans-serif;
  font-size: 12px;
}
.combo-view select {
  background: #0078d7;
  color: #fff;
}
.combo-arrow {
  width: 17px;
  display: flex;
  align-items: center;
  justify-content: center;
  background: #f0f0f0;
  border-right: 2px solid #777;
  border-bottom: 2px solid #777;
}
.combo-arrow::after {
  content: "";
  border: 4px solid transparent;
  border-top-color: #000;
  border-bottom: 0;
}

/* top row */
.row-top {
  display: flex;
  flex: none;
  height: 62px;
  gap: 2px;
}
.panel-view {
  flex: 1;
  min-width: 0;
}
.panel-sensor { width: 309px; }
.panel-generator { width: 124px; margin-left: -2px; }
.panel-params { width: 155px; margin-left: -2px; }
.view-body {
  display: flex;
  align-items: flex-start;
  padding: 2px 8px 0 0;
}
.combo-view {
  width: 200px;
  margin-top: 3px;
}
.readout {
  flex: 1;
  min-width: 0;
  height: 28px;
  margin-left: 9px;
  padding-left: 1px;
  border: 1px solid #a0a0a0;
  border-right-color: #fff;
  border-bottom-color: #fff;
  background: #f0f0f0;
  font-family: "Liberation Sans", sans-serif;
  font-size: 16px;
  font-weight: bold;
  line-height: 20px;
  white-space: nowrap;
  overflow: hidden;
}
.spin {
  margin: 2px 0 0 7px;
  display: flex;
  flex-direction: column;
  gap: 1px;
}
.spin button {
  width: 17px;
  height: 12px;
  font-size: 6px;
  line-height: 8px;
  border: 1px solid #fff;
  border-right: 2px solid #696969;
  border-bottom: 2px solid #696969;
}
.device {
  flex: 1;
  display: flex;
  flex-direction: column;
  padding: 0 19px 0 3px;
  font-family: "DejaVu Sans", sans-serif;
  font-size: 12px;
}
.panel-generator .device {
  padding: 0 3px 0 1px;
}
.device p {
  height: 17px;
  line-height: 18px;
  white-space: nowrap;
}
.device-row {
  display: flex;
  align-items: center;
  height: 18px;
}
.adaptive {
  width: 106px;
  padding-left: 1px;
}
.tri {
  margin-left: 1px;
}
.config {
  margin-left: auto;
}
.panel-sensor .config {
  margin-right: -11px;
}

/* check boxes and radios */
input[type="checkbox"] {
  appearance: none;
  flex: none;
  width: 13px;
  height: 13px;
  margin: 0;
  background: #fff;
  border: 2px solid #808080;
  border-right: 1px solid #e0e0e0;
  border-bottom: 1px solid #e0e0e0;
}
input[type="checkbox"]:disabled {
  background: #ebebeb;
}
input[type="radio"] {
  appearance: none;
  flex: none;
  width: 11px;
  height: 11px;
  margin: 0;
  border-radius: 50%;
  background: #fff;
  border: 1px solid #606060;
  border-right-color: #ddd;
  border-bottom-color: #ddd;
}
input[type="radio"]:disabled {
  background: #ebebeb;
}
input[type="radio"]:checked {
  background: radial-gradient(#000 0 2px, #fff 2px);
}
.off {
  color: #a0a0a0;
}
.params {
  padding: 1px 0 0 7px;
  font-family: "DejaVu Sans", sans-serif;
  font-size: 12px;
}
.params label {
  display: flex;
  align-items: center;
  gap: 6px;
  height: 17px;
  white-space: nowrap;
}

/* measures grid */
.row-mid {
  display: flex;
  flex: none;
  height: 223px;
  gap: 2px;
}
.panel-table {
  flex: 1;
  min-width: 0;
}
.box-active {
  border: 1px solid #888;
  box-shadow: inset 0 0 0 2px #e8e800;
  padding: 0 2px 2px;
}
.panel-table h2 {
  height: 14px;
  line-height: 16px;
  font-family: "Open Sans", sans-serif;
  border-bottom: 0;
}
.grid-pane {
  margin: 0 16px 0 1px;
  border: 1px solid #696969;
  border-right-color: #fff;
  border-bottom-color: #fff;
  background: #f0f0f0;
}
.grid-view {
  display: flex;
  height: 178px;
  overflow: hidden;
  border-bottom: 1px solid #fff;
}
table {
  border-collapse: separate;
  border-spacing: 0;
  table-layout: fixed;
}
.data {
  flex: 1;
  min-width: 0;
  height: 198px;
  font-size: 11px;
  background: #fff;
}
.c-head {
  width: 54px;
}
.c-wide {
  width: 344px;
}
.data th,
.data td {
  height: 25px;
  padding: 0 1px;
  line-height: 15px;
}
.data th {
  background: #f0f0f0;
  border-right: 1px solid #696969;
  border-bottom: 1px solid #696969;
  box-shadow: inset 1px 1px #fff;
  white-space: nowrap;
}
.data thead th {
  height: 23px;
}
.data td {
  text-align: right;
  border-right: 1px solid #c0c0c0;
  border-bottom: 1px solid #c0c0c0;
}
.data .s25 { background: #c0f0c0; }
.data .s50 { background: #90f090; }
.data .s75 { background: #60f060; }
.data .s100 { background: #30f030; }
.delta-e td { font-weight: bold; }
.data .bad { background: #ffaeae; }
.data .good { background: #aeffae; }
.data .fair { background: #ffffae; }
.light td { background: #f0f0f0; }
.mid td { background: #e0e0e0; }

/* scroll bars */
.vscroll,
.hscroll {
  display: flex;
  background: #f0f0f0;
}
.vscroll {
  width: 17px;
  flex: none;
  flex-direction: column;
}
.hscroll {
  height: 17px;
  justify-content: space-between;
}
.thumb {
  flex: 1;
  background: #cdcdcd;
}
.vscroll button,
.hscroll button {
  width: 17px;
  height: 17px;
  flex: none;
  display: flex;
  align-items: center;
  justify-content: center;
}
.vscroll button::after,
.hscroll button::after {
  content: "";
  width: 6px;
  height: 6px;
  border: solid #505050;
  border-width: 2px 0 0 2px;
  transform: rotate(45deg);
}
.vscroll .down::after { transform: rotate(225deg); }
.hscroll .left::after { transform: rotate(-45deg); }
.hscroll .right::after { transform: rotate(135deg); }
.faint {
  padding-right: 18px;
}
.faint button::after {
  border-color: #c0c0c0;
}
.doc-v {
  width: 19px;
  padding: 1px 2px 0 0;
  border-left: 1px solid #fff;
}
.doc-v .thumb {
  margin-bottom: 23px;
}
.doc-h {
  height: 21px;
  padding: 0 2px 4px 2px;
  border-top: 1px solid #fff;
}
.doc-h .thumb {
  margin-right: 38px;
}
.grid-view .thumb {
  margin-bottom: 2px;
}

/* display column */
.side {
  width: 85px;
  display: flex;
  flex-direction: column;
  align-items: flex-start;
}
.panel-display {
  width: 85px;
  height: 105px;
}
.radios {
  padding-left: 5px;
  font-family: "DejaVu Sans", sans-serif;
  font-size: 12px;
}
.radios label {
  display: flex;
  align-items: center;
  gap: 7px;
  height: 15px;
}
.radios label + label {
  margin-top: 1px;
}
.side-buttons {
  width: 83px;
  margin-top: 1px;
  display: flex;
  flex-direction: column;
  font-family: "DejaVu Sans", sans-serif;
  font-size: 12px;
}
.side-buttons button {
  height: 30px;
  display: flex;
  align-items: center;
  padding-left: 4px;
  background: #ececec;
  border: 1px solid #fff;
  border-right-color: #777;
  border-bottom-color: #b0b0b0;
}
.side-buttons span {
  flex: 1;
  text-align: center;
}
.edit-box {
  width: 56px;
  height: 18px;
  margin: 4px 0 0 5px;
  display: flex;
  align-items: center;
  gap: 6px;
  background: #f0f0f0;
  font-family: "DejaVu Sans", sans-serif;
}

/* selected color */
.row-bottom {
  flex: 1;
  min-height: 0;
  display: flex;
  gap: 4px;
}
.panel-color {
  width: 383px;
}
.color-body {
  flex: 1;
  min-height: 0;
  display: flex;
  font-family: "DejaVu Sans", sans-serif;
  font-size: 12px;
}
.levels-col {
  width: 214px;
  padding: 3px 0 0 7px;
}
.tag {
  height: 14px;
  line-height: 14px;
  background: #f0f0f0;
}
.tag-levels {
  width: 112px;
  margin-left: 2px;
  padding-left: 2px;
}
.levels {
  width: 200px;
  margin-top: 10px;
}
.level-text {
  font-family: "Liberation Serif", serif;
  font-size: 11px;
  font-weight: bold;
  text-anchor: middle;
  fill: #111;
}
.compare {
  width: 192px;
  height: 74px;
  margin: 14px 0 0 2px;
  display: grid;
  grid-template-columns: 1fr 1fr;
  text-align: center;
  background: #f0f0f0;
  font-family: "Liberation Sans", sans-serif;
  font-size: 14px;
  font-weight: bold;
}
.tag-target {
  width: 43px;
  margin: 15px 0 0 2px;
  padding-left: 2px;
}
.target {
  width: 116px;
  height: 89px;
  margin: 1px 0 0 36px;
  border: 1px solid #000;
  border-bottom: 0;
  background: conic-gradient(#40ff00, #ffc000 52deg, #ff0000 90deg, #ff0090 128deg, #8000c0 180deg, #0000ff 232deg, #0088b0 270deg, #00ff80 308deg, #40ff00);
}
.measure-col {
  padding-top: 1px;
}
.measure-col .tag {
  width: 128px;
  margin-left: 9px;
  text-align: center;
}
.measure-pane {
  width: 153px;
  height: 535px;
  margin-top: 10px;
  display: flex;
  overflow: hidden;
  border: 2px solid #696969;
  border-top: 1px solid #696969;
  border-right-color: #fff;
  border-bottom-color: #fff;
  background: #f0f0f0;
}
.measure {
  width: 132px;
  height: 552px;
  font-family: "Open Sans", sans-serif;
  font-size: 12px;
  background: #fff;
}
.measure th {
  width: 52px;
  height: 23px;
  padding: 0;
  line-height: 16px;
  background: #f0f0f0;
  border-right: 1px solid #696969;
  border-bottom: 1px solid #696969;
  box-shadow: inset 1px 1px #fff;
}
.measure td {
  padding: 0;
  border-right: 1px solid #c0c0c0;
  border-bottom: 1px solid #c0c0c0;
}
.measure-pane .vscroll {
  width: 17px;
  padding: 0 1px;
}
.measure-pane .vscroll button {
  width: 15px;
}
.measure-pane .thumb {
  margin-bottom: 18px;
}

/* information */
.panel-info {
  flex: 1;
  min-width: 0;
}
.info-body {
  padding: 4px 0 0 2px;
}
.combo-info {
  width: 303px;
}
.charts {
  display: flex;
  margin: 6px 0 0 2px;
}
.chart {
  flex: 1;
  min-width: 0;
  border: 4px solid #888;
  border-right-color: #f4f4f4;
  border-bottom-color: #f4f4f4;
}
.chart svg {
  width: 100%;
}
.gridline {
  stroke: #004040;
  fill: none;
}
.axis-y,
.axis-x {
  font-family: "Liberation Serif", serif;
  font-size: 14px;
}
.axis-y {
  fill: #b8b8b8;
}
.chart-title {
  font-family: "Liberation Sans", sans-serif;
  font-size: 15px;
  font-weight: bold;
  fill: #cccc08;
  text-anchor: middle;
}
.watermark {
  font-family: "Liberation Sans", sans-serif;
  font-size: 16px;
  font-weight: bold;
  fill: #9c9c9c;
  text-anchor: end;
}
.series {
  fill: none;
  stroke-width: 2;
}
.red { stroke: #f00; marker: url(#m-red); }
.green { stroke: #0f0; marker: url(#m-green); }
.blue { stroke: #00f; marker: url(#m-blue); }
.magenta { stroke: #f0f; marker: url(#m-magenta); }
.yellow { stroke: #ff0; marker: url(#m-yellow); }
.white {
  stroke: #e6e6e6;
  stroke-width: 1;
  stroke-dasharray: 3 2;
  marker: url(#m-white);
}

/* tabs */
.tabstrip {
  height: 20px;
  flex: none;
  display: flex;
  align-items: center;
  border-top: 1px solid #000;
  font-family: "Liberation Sans", sans-serif;
  font-size: 11px;
}
.tab-nav {
  display: flex;
  width: 54px;
  height: 19px;
  border: solid #000;
  border-width: 0 1px 1px;
}
.tab-nav button {
  flex: 1;
  display: flex;
  align-items: center;
  justify-content: center;
  border: 1px solid #fff;
  border-right-color: #777;
  border-bottom-color: #777;
}
.tab-nav svg {
  width: 9px;
  height: 9px;
}
.tabs {
  display: flex;
  flex: 1;
}
.tab {
  height: 19px;
  display: grid;
  align-items: center;
  justify-items: center;
  font-size: 10px;
}
.tab svg,
.tab span {
  grid-area: 1 / 1;
}
.tab svg {
  width: 100%;
  height: 19px;
  overflow: visible;
}
.tab-measures {
  width: 74px;
  font-weight: bold;
}
.tab-luminance { width: 60px; }
.tab-gamma { width: 52px; }
.tab-gamma span { padding-left: 4px; }
.tab-temp { width: 112px; }
.badge-icon {
  margin-right: 80px;
}
.tab-ref {
  display: flex;
  align-items: center;
  gap: 5px;
  padding-right: 6px;
}

/* status bar */
.statusbar {
  height: 17px;
  flex: none;
  display: flex;
  align-items: stretch;
  gap: 3px;
  background: linear-gradient(90deg, #e2eaf6, #f0f4fc);
  font-size: 12px;
  line-height: 20px;
}
.ready {
  flex: 1;
  padding-left: 2px;
}
.cell {
  border: solid #8ca8cc;
  border-width: 1px 0 0 1px;
}
.cell-wide { width: 74px; }
.cell-small { width: 28px; }
.cell-num {
  width: 33px;
  padding-left: 2px;
}
.edge {
  height: 2px;
  flex: none;
  background: #26282c;
}
```
